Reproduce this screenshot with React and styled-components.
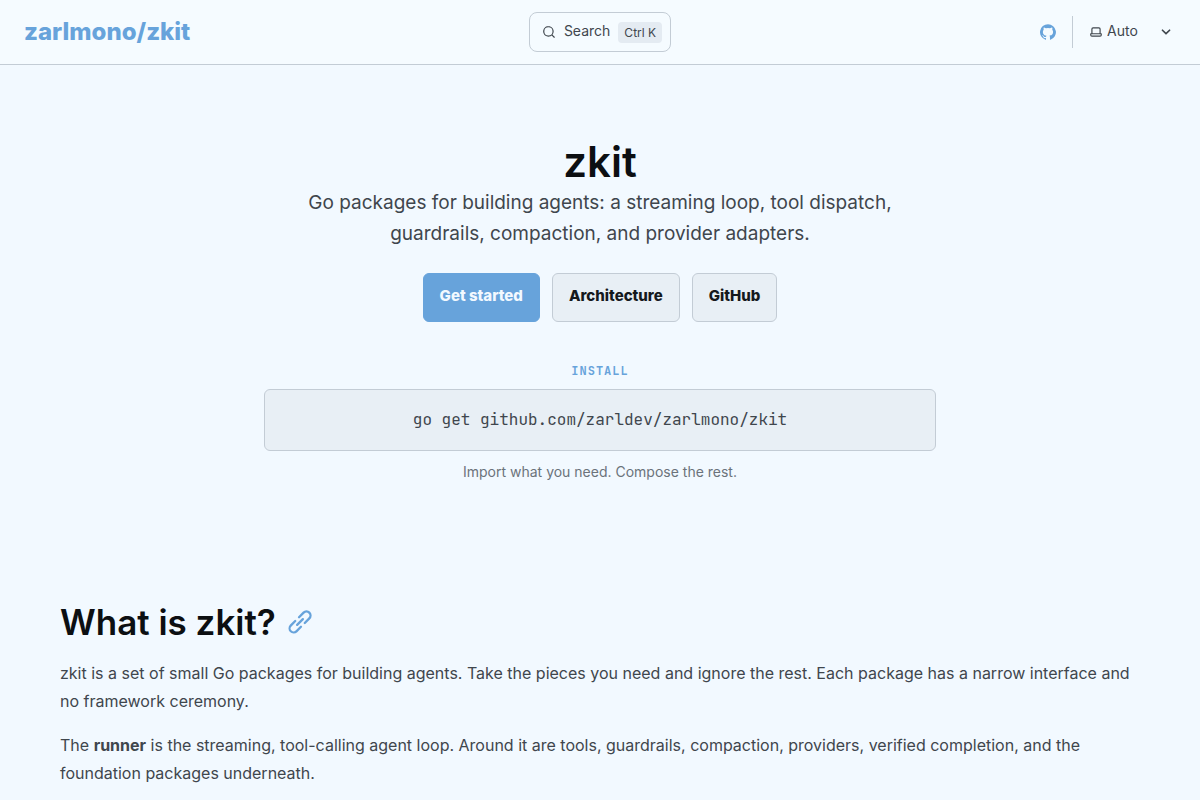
import React, { useState } from "react";
import styled, { createGlobalStyle } from "styled-components";

const icons = {
    search: "M21.71 20.29 18 16.61A9 9 0 1 0 16.61 18l3.68 3.68a.999.999 0 0 0 1.42 0 1 1 0 0 0 0-1.39ZM11 18a7 7 0 1 1 0-14 7 7 0 0 1 0 14Z",
    github: "M12 .3a12 12 0 0 0-3.8 23.38c.6.12.83-.26.83-.57L9 21.07c-3.34.72-4.04-1.61-4.04-1.61-.55-1.39-1.34-1.76-1.34-1.76-1.08-.74.09-.73.09-.73 1.2.09 1.83 1.24 1.83 1.24 1.08 1.83 2.81 1.3 3.5 1 .1-.78.42-1.31.76-1.61-2.67-.3-5.47-1.33-5.47-5.93 0-1.31.47-2.38 1.24-3.22-.14-.3-.54-1.52.1-3.18 0 0 1-.32 3.3 1.23a11.5 11.5 0 0 1 6 0c2.28-1.55 3.29-1.23 3.29-1.23.64 1.66.24 2.88.12 3.18a4.65 4.65 0 0 1 1.23 3.22c0 4.61-2.8 5.63-5.48 5.92.42.36.81 1.1.81 2.22l-.01 3.29c0 .31.2.69.82.57A12 12 0 0 0 12 .3Z",
    laptop: "M21 14h-1V7a3 3 0 0 0-3-3H7a3 3 0 0 0-3 3v7H3a1 1 0 0 0-1 1v2a3 3 0 0 0 3 3h14a3 3 0 0 0 3-3v-2a1 1 0 0 0-1-1ZM6 7a1 1 0 0 1 1-1h10a1 1 0 0 1 1 1v7H6V7Zm14 10a1 1 0 0 1-1 1H5a1 1 0 0 1-1-1v-1h16v1Z",
    caret: "M17 9.17a1 1 0 0 0-1.41 0L12 12.71 8.46 9.17a1 1 0 1 0-1.41 1.42l4.24 4.24a1.002 1.002 0 0 0 1.42 0L17 10.59a1.002 1.002 0 0 0 0-1.42Z",
    link: "m12.11 15.39-3.88 3.88a2.52 2.52 0 0 1-3.5 0 2.47 2.47 0 0 1 0-3.5l3.88-3.88a1 1 0 0 0-1.42-1.42l-3.88 3.89a4.48 4.48 0 0 0 6.33 6.33l3.89-3.88a1 1 0 1 0-1.42-1.42Zm8.58-12.08a4.49 4.49 0 0 0-6.33 0l-3.89 3.88a1 1 0 0 0 1.42 1.42l3.88-3.88a2.52 2.52 0 0 1 3.5 0 2.47 2.47 0 0 1 0 3.5l-3.88 3.88a1 1 0 1 0 1.42 1.42l3.88-3.89a4.49 4.49 0 0 0 0-6.33ZM8.83 15.17a1 1 0 0 0 1.1.22 1 1 0 0 0 .32-.22l4.92-4.92a1 1 0 0 0-1.42-1.42l-4.92 4.92a1 1 0 0 0 0 1.42Z",
};

function Icon({ name, size = 16 }) {
    return (
        <Svg viewBox="0 0 24 24" width={size} height={size} fill="currentColor" aria-hidden="true">
            <path d={icons[name]} />
        </Svg>
    )
}

function Header() {
    const [theme, setTheme] = useState("auto");

    return (
        <TopBar>
            <SiteTitle href="#">zarlmono/zkit</SiteTitle>
            <SearchButton type="button">
                <Icon name="search" size={14} />
                <SearchText>Search</SearchText>
                <Kbd>Ctrl K</Kbd>
            </SearchButton>
            <RightGroup>
                <SocialLink href="#github" aria-label="GitHub"><Icon name="github" /></SocialLink>
                <ThemeLabel>
                    <Icon name="laptop" size={14} />
                    <ThemeSelect aria-label="Select theme" value={theme} onChange={(e) => setTheme(e.target.value)}>
                        <option value="dark">Dark</option>
                        <option value="light">Light</option>
                        <option value="auto">Auto</option>
                    </ThemeSelect>
                    <Icon name="caret" size={20} />
                </ThemeLabel>
            </RightGroup>
        </TopBar>
    )
}

function App() {
    return (
        <>
            <GlobalStyle />
            <Header />
            <main>
                <Hero>
                    <HeroTitle>zkit</HeroTitle>
                    <Tagline>
                        Go packages for building agents: a streaming loop, tool dispatch, guardrails, compaction, and provider adapters.
                    </Tagline>
                    <Actions>
                        <ActionLink href="#start" $primary>Get started</ActionLink>
                        <ActionLink href="#architecture">Architecture</ActionLink>
                        <ActionLink href="#github">GitHub</ActionLink>
                    </Actions>
                    <InstallLabel>INSTALL</InstallLabel>
                    <InstallBox><code>go get github.com/zarldev/zarlmono/zkit</code></InstallBox>
                    <InstallNote>Import what you need. Compose the rest.</InstallNote>
                </Hero>
                <Content>
                    <HeadingRow>
                        <Heading id="what-is-zkit">What is zkit?</Heading>
                        <AnchorLink href="#what-is-zkit" aria-label="Section titled What is zkit?">
                            <Icon name="link" size={28} />
                        </AnchorLink>
                    </HeadingRow>
                    <Paragraph>
                        zkit is a set of small Go packages for building agents. Take the pieces you need and ignore the rest. Each package has a narrow interface and no framework ceremony.
                    </Paragraph>
                    <Paragraph>
                        The <strong>runner</strong> is the streaming, tool-calling agent loop. Around it are tools, guardrails, compaction, providers, verified completion, and the foundation packages underneath.
                    </Paragraph>
                </Content>
            </main>
        </>
    )
}

const mono = `"JetBrains Mono", "DejaVu Sans Mono", monospace`;

const GlobalStyle = createGlobalStyle`
    * {
        box-sizing: border-box;
        margin: 0;
    }

    body {
        background-color: #f2f9ff;
        color: #3f464d;
        font-family: Inter, "Liberation Sans", sans-serif;
        font-size: 16px;
        line-height: 28px;
    }

    a {
        text-decoration: none;
    }
`;

const Svg = styled.svg`
    display: block;
    flex-shrink: 0;
`;

const TopBar = styled.header`
    display: grid;
    grid-template-columns: 1fr auto 1fr;
    align-items: center;
    height: 65px;
    padding: 0 24px;
    background-color: #f5fbff;
    border-bottom: 1px solid #c3ccd5;
`;

const SiteTitle = styled.a`
    justify-self: start;
    color: #67a3db;
    font-size: 24px;
    font-weight: 800;
`;

const SearchButton = styled.button`
    display: flex;
    align-items: center;
    gap: 8px;
    height: 40px;
    padding: 0 8px 0 12px;
    border: 1px solid #c3ccd5;
    border-radius: 8px;
    background: transparent;
    color: #3f464d;
    font-family: inherit;
    font-size: 14px;
    cursor: pointer;
`;

const SearchText = styled.span`
    padding-bottom: 3px;
`;

const Kbd = styled.kbd`
    padding: 0 6px;
    border-radius: 4px;
    background-color: #e4ebf2;
    font-family: inherit;
    font-size: 12px;
    line-height: 21px;
`;

const RightGroup = styled.div`
    display: flex;
    align-items: center;
    justify-self: end;
    gap: 16px;
`;

const SocialLink = styled.a`
    color: #67a3db;
`;

const ThemeLabel = styled.label`
    display: flex;
    align-items: center;
    gap: 4px;
    height: 32px;
    padding-left: 16px;
    border-left: 1px solid #c3ccd5;
`;

const ThemeSelect = styled.select`
    width: 45px;
    border: 0;
    padding: 0 0 3px;
    appearance: none;
    background: transparent;
    color: inherit;
    font-family: inherit;
    font-size: 14px;
    cursor: pointer;
`;

const Hero = styled.section`
    max-width: 672px;
    margin: 0 auto;
    padding: 72px 0 116px;
    text-align: center;
`;

const HeroTitle = styled.h1`
    color: #0c0f12;
    font-size: 42px;
    font-weight: 600;
    line-height: 50px;
`;

const Tagline = styled.p`
    font-size: 19px;
    line-height: 31px;
`;

const Actions = styled.div`
    display: flex;
    justify-content: center;
    gap: 12px;
    margin-top: 24px;
`;

const ActionLink = styled.a`
    height: 49px;
    padding: 8px 16px;
    border: 1px solid ${props => props.$primary ? "#67a3db" : "#c3ccd5"};
    border-radius: 6px;
    background-color: ${props => props.$primary ? "#67a3db" : "#e8eff5"};
    color: ${props => props.$primary ? "#f2f9ff" : "#15191d"};
    font-size: 15px;
    font-weight: 800;
`;

const InstallLabel = styled.p`
    margin-top: 40px;
    color: #67a3db;
    font-family: ${mono};
    font-size: 12px;
    font-weight: 700;
    letter-spacing: 1px;
    line-height: 19px;
`;

const InstallBox = styled.pre`
    margin-top: 8px;
    padding: 16px;
    border: 1px solid #c3ccd5;
    border-radius: 6px;
    background-color: #e8eff5;

    code {
        font-family: ${mono};
        font-size: 16px;
    }
`;

const InstallNote = styled.p`
    margin-top: 8px;
    color: #6b737b;
    font-size: 14px;
    line-height: 25px;
`;

const Content = styled.section`
    max-width: 1080px;
    margin: 0 auto;
`;

const HeadingRow = styled.div`
    display: flex;
    align-items: center;
    gap: 10px;
`;

const Heading = styled.h2`
    color: #0c0f12;
    font-size: 35px;
    font-weight: 600;
    line-height: 44px;
`;

const AnchorLink = styled.a`
    color: #67a3db;
`;

const Paragraph = styled.p`
    margin-top: 16px;

    ${HeadingRow} + & {
        margin-top: 15px;
    }
`;

export default App;
